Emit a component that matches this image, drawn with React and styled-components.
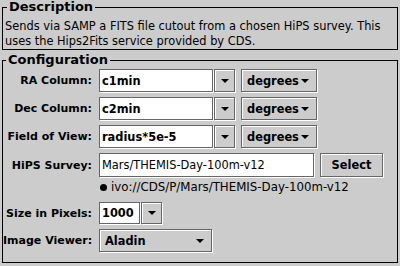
import React from "react";
import styled, { createGlobalStyle } from "styled-components";

const GlobalStyle = createGlobalStyle`
  html, body {
    margin: 0;
    padding: 0;
    background: #cccccc;
  }
  body {
    width: 400px;
    height: 266px;
    overflow: hidden;
    font-family: "DejaVu Sans", sans-serif;
    font-size: 11.4px;
    color: #000;
  }
`;

const Frame = styled.div`
  display: flex;
  flex-direction: column;
  gap: 3px;
  padding: 0 2px;
`;

const Group = styled.fieldset`
  margin: 0;
  min-width: 0;
  border: 1px solid #000;
  padding: ${(p) => p.$pad};
`;

const Legend = styled.legend`
  font-weight: bold;
  font-size: 13px;
  line-height: 14px;
  padding: 0 2px;
  margin-left: 3px;
`;

const Blurb = styled.div`
  line-height: 15px;
  padding-left: 1px;
  white-space: nowrap;
`;

const Form = styled.div`
  display: grid;
  grid-template-columns: 89px 1fr;
  column-gap: 7px;
  row-gap: 5px;
  align-items: center;
`;

const Label = styled.div`
  font-weight: bold;
  font-size: 11px;
  text-align: right;
  white-space: nowrap;
`;

const Line = styled.div`
  display: flex;
  align-items: center;
  gap: 6px;
`;

const Etched = styled.div`
  box-sizing: border-box;
  border: 1px solid #666666;
  box-shadow: 1px 1px 0 #ffffff;
  height: ${(p) => p.$h || 23}px;
`;

const Field = styled(Etched)`
  width: ${(p) => p.$w}px;
  background: #ffffff;
  display: flex;
  align-items: center;
  padding-left: 2px;
  font-weight: ${(p) => (p.$bold ? "bold" : "normal")};
  white-space: nowrap;
  overflow: hidden;
`;

const EditCombo = styled.div`
  display: flex;
  gap: 1px;
`;

const ArrowButton = styled(Etched)`
  width: 21px;
  background: #cccccc;
  box-shadow: inset 1px 1px 0 #ffffff, 1px 1px 0 #ffffff;
  display: flex;
  align-items: center;
  justify-content: center;
`;

const SelectBox = styled(Etched)`
  width: ${(p) => p.$w}px;
  background: #cccccc;
  box-shadow: inset 1px 1px 0 #ffffff, 1px 1px 0 #ffffff;
  display: flex;
  align-items: center;
  justify-content: space-between;
  padding: 0 7px 0 5px;
  font-weight: bold;
  white-space: nowrap;
`;

const Button = styled(Etched)`
  width: ${(p) => p.$w}px;
  background: #cccccc;
  box-shadow: inset 1px 1px 0 #ffffff, 1px 1px 0 #ffffff;
  display: flex;
  align-items: center;
  justify-content: center;
  font-weight: bold;
`;

const Ivo = styled.div`
  display: flex;
  align-items: center;
  gap: 4px;
  height: 14px;
  margin: -2px 0 3px 1px;
  font-size: 11.8px;
  white-space: nowrap;
`;

const Dot = styled.span`
  width: 7px;
  height: 7px;
  border-radius: 50%;
  background: #000;
`;

const Arrow = () => (
  <svg width="8" height="4" viewBox="0 0 8 4">
    <polygon points="0,0 8,0 4,4" fill="#000" />
  </svg>
);

function Combo({ value, width, h }) {
  return (
    <EditCombo>
      <Field $w={width} $h={h} $bold>
        {value}
      </Field>
      <ArrowButton $h={h}>
        <Arrow />
      </ArrowButton>
    </EditCombo>
  );
}

function Select({ value, width }) {
  return (
    <SelectBox $w={width}>
      <span>{value}</span>
      <Arrow />
    </SelectBox>
  );
}

export default function App() {
  return (
    <>
      <GlobalStyle />
      <Frame>
        <Group $pad="5px 2px 0 1px">
          <Legend>Description</Legend>
          <Blurb>
            Sends via SAMP a FITS file cutout from a chosen HiPS survey. This
            <br />
            uses the Hips2Fits service provided by CDS.
          </Blurb>
        </Group>
        <Group $pad="2px 2px 10px 0">
          <Legend>Configuration</Legend>
          <Form>
            <Label>RA Column:</Label>
            <Line>
              <Combo value="c1min" width={114} />
              <Select value="degrees" width={76} />
            </Line>
            <Label>Dec Column:</Label>
            <Line>
              <Combo value="c2min" width={114} />
              <Select value="degrees" width={76} />
            </Line>
            <Label>Field of View:</Label>
            <Line>
              <Combo value="radius*5e-5" width={114} />
              <Select value="degrees" width={76} />
            </Line>
            <Label>HiPS Survey:</Label>
            <Line>
              <Field $w={215} $h={24}>
                Mars/THEMIS-Day-100m-v12
              </Field>
              <Button $w={63} $h={24}>
                Select
              </Button>
            </Line>
            <span />
            <Ivo>
              <Dot />
              ivo://CDS/P/Mars/THEMIS-Day-100m-v12
            </Ivo>
            <Label>Size in Pixels:</Label>
            <Line>
              <Combo value="1000" width={41} h={22} />
            </Line>
            <Label>Image Viewer:</Label>
            <Line>
              <Select value="Aladin" width={113} />
            </Line>
          </Form>
        </Group>
      </Frame>
    </>
  );
}
